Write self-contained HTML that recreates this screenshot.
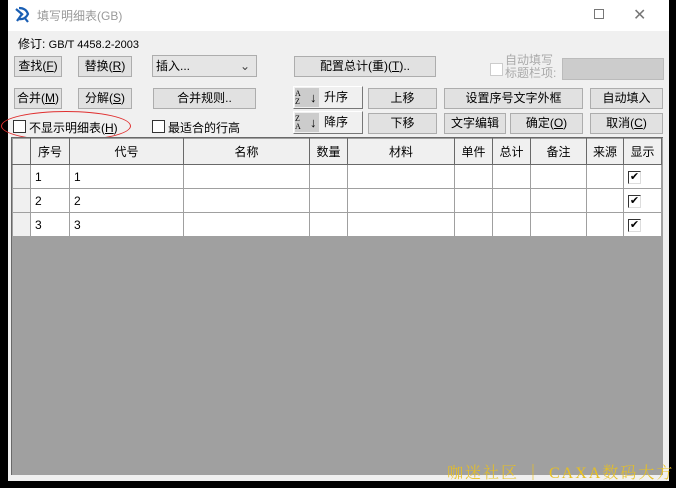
<!DOCTYPE html>
<html><head><meta charset="utf-8"><style>
*{margin:0;padding:0;box-sizing:border-box}
body{width:676px;height:488px;background:#000;position:relative;overflow:hidden;font-family:"Liberation Sans","Noto Sans CJK SC",sans-serif;font-size:12px;color:#000}
.a{position:absolute}
#win{left:8px;top:0;width:661px;height:481px;background:#f0f0f0}
#title{left:8px;top:0;width:661px;height:31px;background:#fff}
.btn{position:absolute;background:#e1e1e1;border:1px solid #adadad;text-align:center;line-height:19px;height:21px;font-size:12px}
.cb{position:absolute;width:13px;height:13px;border:1px solid #333;background:#fff}
#grid{left:11px;top:137px;width:652px;height:338px;background:#a0a0a0;border-left:1px solid #696969;border-top:1px solid #696969}
table{position:absolute;left:12px;top:138px;border-collapse:collapse;font-size:12px}
td{border:1px solid #a0a0a0;height:24px;background:#fff;padding-left:4px}
tr.h td{background:#f0f0f0;text-align:center;height:26px;padding:0;border-color:#a0a0a0 #696969 #696969 #a0a0a0}
td.rh{background:#f0f0f0;padding:0}
.chk{display:inline-block;width:13px;height:13px;border:1px solid #333;border-right-color:#ddd;border-bottom-color:#ddd;font-size:11px;line-height:11px;text-align:center;vertical-align:middle}
</style></head><body>
<div id="win" class="a"></div>
<div id="title" class="a"></div>
<svg class="a" style="left:14px;top:6px" width="18" height="18" viewBox="0 0 18 18"><path d="M2 3 L9 9 M5 2 Q12 2 14 8 Q11 14 5 13 M8 8 L3 15 M10 11 L14 16" stroke="#1a5fb4" stroke-width="2.2" fill="none"/></svg>
<div class="a" style="left:37px;top:7px;color:#999;font-size:12px">填写明细表(GB)</div>
<div class="a" style="left:594px;top:9px;width:10px;height:10px;border:1px solid #777"></div>
<div class="a" style="left:633px;top:5px;font-size:16px;color:#777">✕</div>
<div class="a" style="left:18px;top:35px">修订: <span style="font-size:11px">GB/T 4458.2-2003</span></div>
<div class="btn" style="left:14px;top:56px;width:48px">查找(<u>F</u>)</div>
<div class="btn" style="left:78px;top:56px;width:54px">替换(<u>R</u>)</div>
<div class="a" style="left:152px;top:55px;width:105px;height:22px;background:#e5e5e5;border:1px solid #adadad;padding-left:3px;line-height:20px">插入...<span style="position:absolute;right:6px;color:#444">⌄</span></div>
<div class="btn" style="left:294px;top:56px;width:142px">配置总计(重)(<u>T</u>)..</div>
<div class="cb" style="left:490px;top:63px;border-color:#ccc"></div>
<div class="a" style="left:505px;top:54px;color:#aaa;line-height:13px">自动填写<br>标题栏项:</div>
<div class="a" style="left:562px;top:58px;width:102px;height:22px;background:#ccc;border:1px solid #bbb"></div>
<div class="btn" style="left:14px;top:88px;width:48px">合并(<u>M</u>)</div>
<div class="btn" style="left:78px;top:88px;width:54px">分解(<u>S</u>)</div>
<div class="btn" style="left:153px;top:88px;width:103px">合并规则..</div>
<div class="btn" style="left:293px;top:86px;width:70px;height:23px;background:#f0f0f0;border-color:#fff #777 #777 #fff;text-align:left;padding-left:30px;line-height:21px">升序<span class="a" style="left:1px;top:1px;width:24px;height:19px;background:#ccc;font-size:8px;line-height:8px;padding-top:2px;font-family:'Liberation Serif'">A<br>Z</span><span class="a" style="left:16px;top:0;font-size:13px">↓</span></div>
<div class="btn" style="left:293px;top:111px;width:70px;height:23px;background:#f0f0f0;border-color:#fff #777 #777 #fff;text-align:left;padding-left:30px;line-height:21px">降序<span class="a" style="left:1px;top:1px;width:24px;height:19px;background:#ccc;font-size:8px;line-height:8px;padding-top:2px;font-family:'Liberation Serif'">Z<br>A</span><span class="a" style="left:16px;top:0;font-size:13px">↓</span></div>
<div class="btn" style="left:368px;top:88px;width:69px">上移</div>
<div class="btn" style="left:368px;top:113px;width:69px">下移</div>
<div class="btn" style="left:444px;top:88px;width:139px">设置序号文字外框</div>
<div class="btn" style="left:444px;top:113px;width:62px">文字编辑</div>
<div class="btn" style="left:510px;top:113px;width:73px">确定(<u>O</u>)</div>
<div class="btn" style="left:590px;top:88px;width:73px">自动填入</div>
<div class="btn" style="left:590px;top:113px;width:73px">取消(<u>C</u>)</div>
<div class="cb" style="left:13px;top:120px"></div>
<div class="a" style="left:29px;top:119px">不显示明细表(<u>H</u>)</div>
<div class="a" style="left:1px;top:111px;width:130px;height:30px;border:1px solid #e03030;border-radius:50%"></div>
<div class="cb" style="left:152px;top:120px"></div>
<div class="a" style="left:168px;top:119px">最适合的行高</div>
<div id="grid" class="a"></div>
<table>
<tr class="h"><td style="width:18px"></td><td style="width:39px">序号</td><td style="width:114px">代号</td><td style="width:126px">名称</td><td style="width:38px">数量</td><td style="width:107px">材料</td><td style="width:38px">单件</td><td style="width:38px">总计</td><td style="width:56px">备注</td><td style="width:37px">来源</td><td style="width:38px">显示</td></tr>
<tr><td class="rh"></td><td>1</td><td>1</td><td></td><td></td><td></td><td></td><td></td><td></td><td></td><td><span class="chk">✔</span></td></tr>
<tr><td class="rh"></td><td>2</td><td>2</td><td></td><td></td><td></td><td></td><td></td><td></td><td></td><td><span class="chk">✔</span></td></tr>
<tr><td class="rh"></td><td>3</td><td>3</td><td></td><td></td><td></td><td></td><td></td><td></td><td></td><td><span class="chk">✔</span></td></tr>
</table>
<div class="a" style="left:447px;top:460px;color:#e8c020;font-family:'Liberation Serif','Noto Serif CJK SC',serif;font-size:16px;font-weight:300;white-space:nowrap;letter-spacing:2px">咖迷社区 ｜ CAXA数码大方</div>
</body></html>
